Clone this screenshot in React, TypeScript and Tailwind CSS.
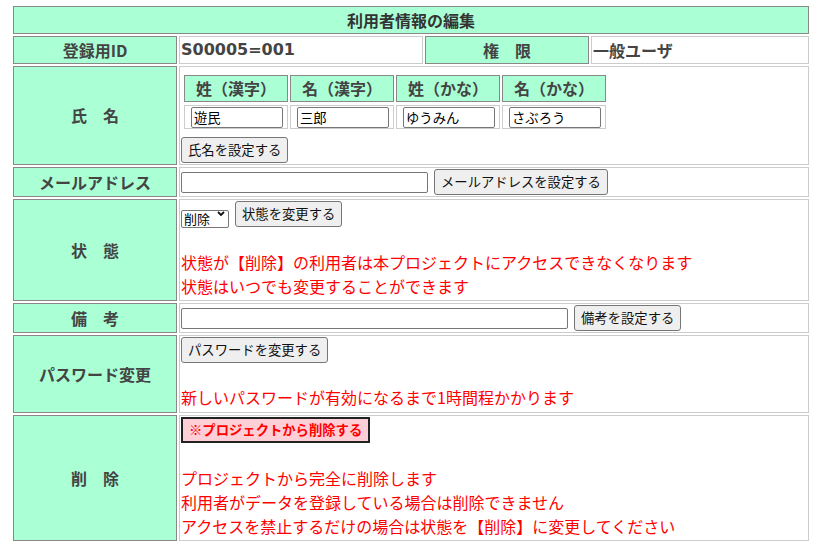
import React from "react";

const label =
  "bg-[#aaffd4] border border-[#888] flex items-center justify-center pb-[1px] font-bold text-[16px] text-[#444]";
const cell = "border border-[#ccc] bg-white";
const btn =
  "h-[26px] px-[6px] border border-[#767676] rounded-[3px] bg-[#efefef] text-[13.33px] text-[#111] leading-none whitespace-nowrap";
const inp =
  "h-[21px] border border-[#767676] rounded-[2px] bg-white px-[2px] text-[13.33px] text-black outline-none";
const red = "text-[16px] leading-[24px] text-[#ff0000] whitespace-nowrap";

export default function App() {
  return (
    <div className="w-[820px] h-[548px] bg-white pt-[6px] pl-[13px] font-['Noto_Sans_CJK_JP','Noto_Sans',sans-serif] overflow-hidden">
      <div className="w-[796px] flex flex-col gap-[2px]">
        {/* Title */}
        <div className="h-[28px] border border-[#888] bg-[#aaffd4] flex items-center justify-center pb-[1px] font-bold text-[16px] text-[#333]">
          利用者情報の編集
        </div>

        {/* Row 1 */}
        <div className="h-[28px] grid grid-cols-[164px_244px_164px_1fr] gap-[2px]">
          <div className={label}>登録用ID</div>
          <div className={`${cell} flex items-center pl-[1px] pb-[1px] font-bold text-[16px] text-[#444] font-['DejaVu_Sans','Noto_Sans_CJK_JP',sans-serif]`}>
            S00005=001
          </div>
          <div className={label}>権　限</div>
          <div className={`${cell} flex items-center pl-[1px] pb-[1px] font-bold text-[16px] text-[#444]`}>
            一般ユーザ
          </div>
        </div>

        {/* Row 2: name */}
        <div className="h-[99px] grid grid-cols-[164px_1fr] gap-[2px]">
          <div className={label}>氏　名</div>
          <div className={`${cell} flex flex-col items-start pt-[8px] pl-[1px]`}>
            <div className="ml-[3px] grid grid-cols-[104px_104px_104px_104px] grid-rows-[27px_24px] gap-x-[2px] gap-y-[3px]">
              {["姓（漢字）", "名（漢字）", "姓（かな）", "名（かな）"].map((t) => (
                <div key={t} className={label}>
                  {t}
                </div>
              ))}
              {["遊民", "三郎", "ゆうみん", "さぶろう"].map((v) => (
                <div key={v} className="border border-[#ccc] flex items-center pl-[6px]">
                  <input className={`${inp} w-[92px]`} defaultValue={v} />
                </div>
              ))}
            </div>
            <button className={`${btn} mt-[8px]`}>氏名を設定する</button>
          </div>
        </div>

        {/* Mail */}
        <div className="h-[30px] grid grid-cols-[164px_1fr] gap-[2px]">
          <div className={label}>メールアドレス</div>
          <div className={`${cell} flex items-center gap-[6px] pl-[1px]`}>
            <input className={`${inp} w-[247px]`} defaultValue="" />
            <button className={btn}>メールアドレスを設定する</button>
          </div>
        </div>

        {/* Status */}
        <div className="h-[102px] grid grid-cols-[164px_1fr] gap-[2px]">
          <div className={label}>状　態</div>
          <div className={`${cell} flex flex-col pl-[1px] pt-[1px]`}>
            <div className="flex items-center gap-[6px]">
              <div className="relative w-[48px] h-[18px]">
                <select className="appearance-none w-[48px] h-[18px] border border-[#767676] rounded-[2px] bg-white pl-[2px] text-[13px] leading-[16px] text-black outline-none">
                  <option>削除</option>
                </select>
                <svg
                  className="absolute right-[4px] top-[6px] pointer-events-none"
                  width="8"
                  height="6"
                  viewBox="0 0 8 6"
                >
                  <path d="M1 1 L4 4 L7 1" fill="none" stroke="#111" strokeWidth="1.8" />
                </svg>
              </div>
              <button className={btn}>状態を変更する</button>
            </div>
            <div className="mt-[23px]">
              <div className={red}>状態が【削除】の利用者は本プロジェクトにアクセスできなくなります</div>
              <div className={red}>状態はいつでも変更することができます</div>
            </div>
          </div>
        </div>

        {/* Notes */}
        <div className="h-[30px] grid grid-cols-[164px_1fr] gap-[2px]">
          <div className={label}>備　考</div>
          <div className={`${cell} flex items-center gap-[6px] pl-[1px]`}>
            <input className={`${inp} w-[387px]`} defaultValue="" />
            <button className={btn}>備考を設定する</button>
          </div>
        </div>

        {/* Password */}
        <div className="h-[78px] grid grid-cols-[164px_1fr] gap-[2px]">
          <div className={label}>パスワード変更</div>
          <div className={`${cell} flex flex-col items-start pl-[1px] pt-[1px]`}>
            <button className={btn}>パスワードを変更する</button>
            <div className="mt-[22px]">
              <div className={red}>新しいパスワードが有効になるまで1時間程かかります</div>
            </div>
          </div>
        </div>

        {/* Delete */}
        <div className="h-[126px] grid grid-cols-[164px_1fr] gap-[2px]">
          <div className={label}>削　除</div>
          <div className={`${cell} flex flex-col items-start pl-[1px] pt-[1px]`}>
            <button className="h-[26px] px-[6px] border-2 border-[#222] bg-[#ffcfd8] text-[13.33px] font-bold text-[#ff0000] leading-none whitespace-nowrap">
              ※プロジェクトから削除する
            </button>
            <div className="mt-[23px]">
              <div className={red}>プロジェクトから完全に削除します</div>
              <div className={red}>利用者がデータを登録している場合は削除できません</div>
              <div className={red}>アクセスを禁止するだけの場合は状態を【削除】に変更してください</div>
            </div>
          </div>
        </div>
      </div>
    </div>
  );
}
